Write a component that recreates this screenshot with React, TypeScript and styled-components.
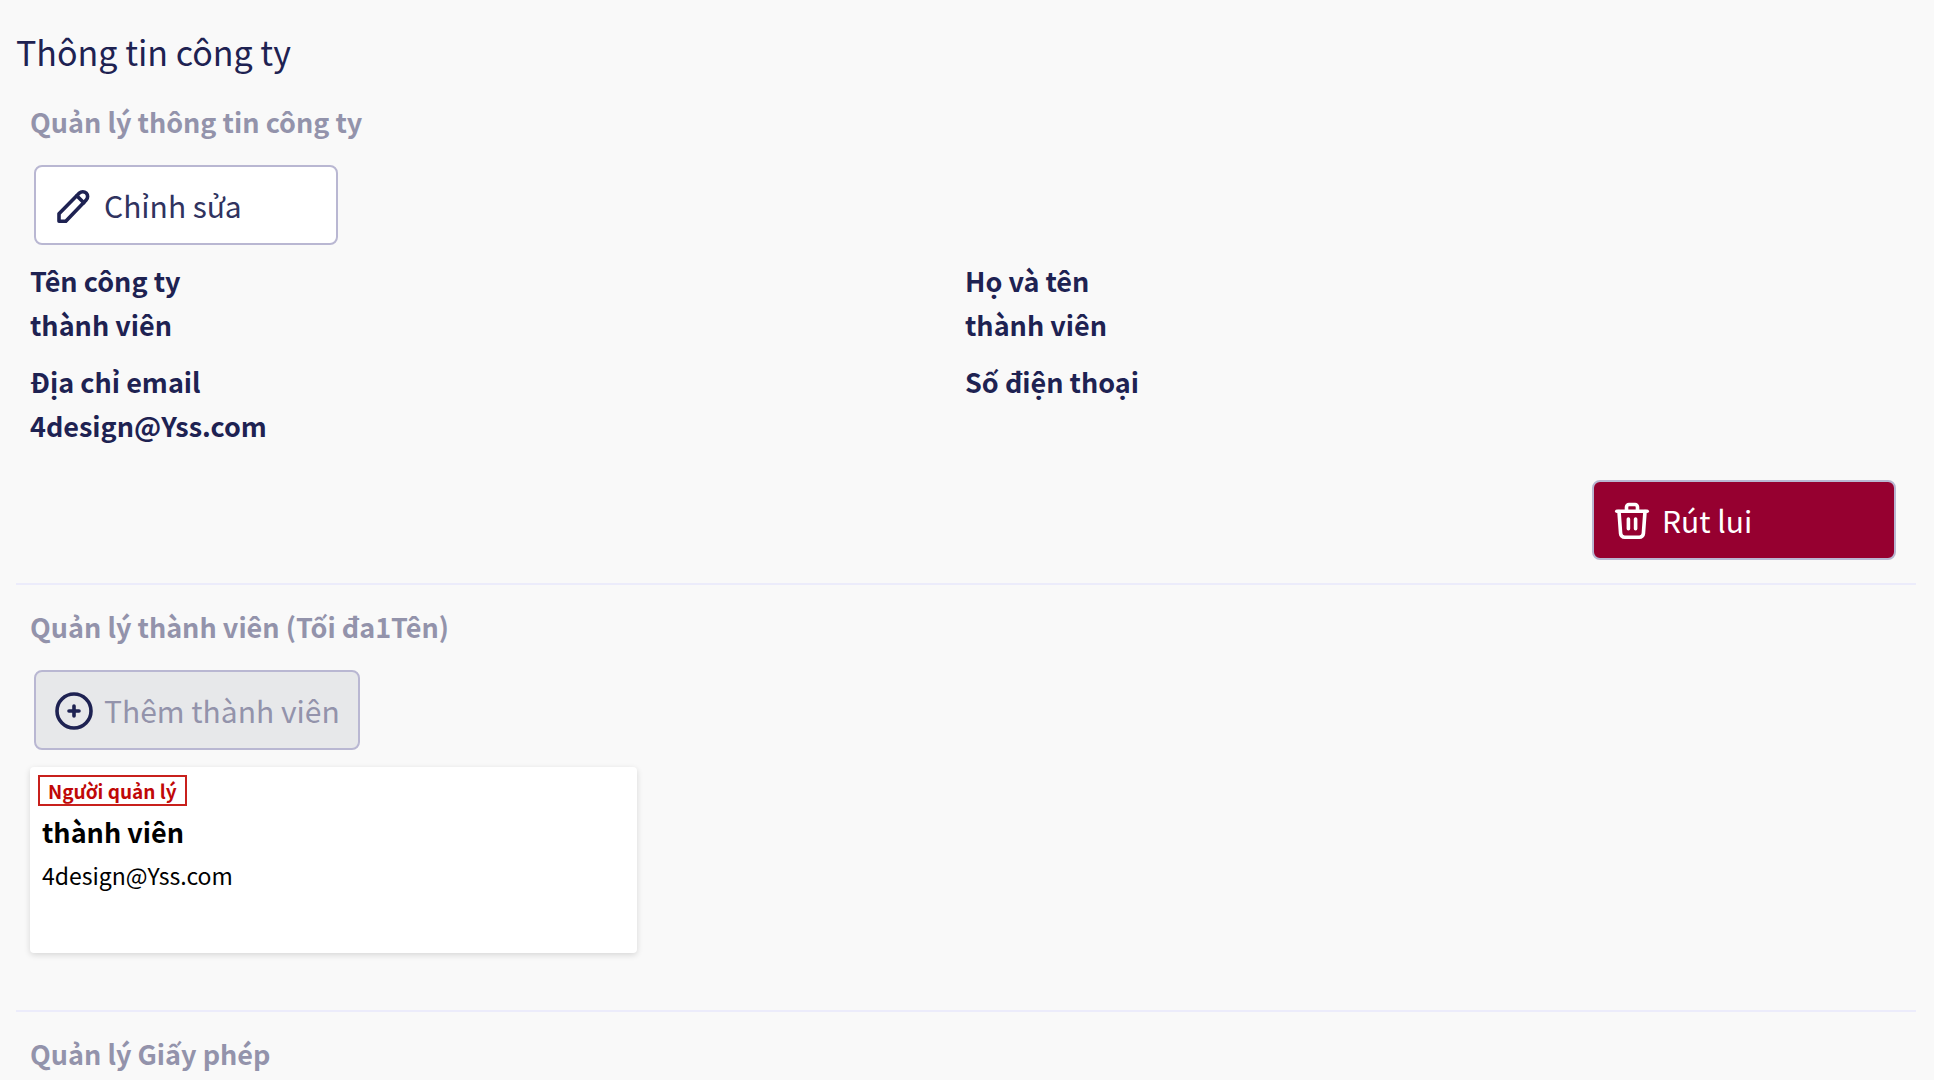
import React from "react";
import styled, { createGlobalStyle } from "styled-components";

const GlobalStyle = createGlobalStyle`
  *, *::before, *::after { box-sizing: border-box; }
  body {
    margin: 0;
    background: #f9f9f9;
    color: #1e2252;
    font-family: "Noto Sans CJK JP", "Noto Sans", sans-serif;
  }
  h1, h2, p, dl, dt, dd, ul { margin: 0; padding: 0; }
`;

const Page = styled.main`
  padding: 24px 18px 0 16px;
`;

const Title = styled.h1`
  font-size: 34px;
  font-weight: 400;
  line-height: 56px;
`;

const Section = styled.section<{ $tall?: boolean }>`
  padding: 20px 16px ${(p) => (p.$tall ? 57 : 23)}px 14px;

  & + & {
    border-top: 2px solid #ececfb;
  }
`;

const SectionTitle = styled.h2`
  color: #9393ab;
  font-size: 27px;
  font-weight: 700;
  line-height: 44px;
`;

const ActionButton = styled.button<{ $tone?: "danger" }>`
  display: flex;
  align-items: center;
  gap: 10px;
  min-width: 304px;
  height: 80px;
  padding: 0 18px;
  border: 2px solid #b9b7d2;
  border-radius: 8px;
  background: ${(p) => (p.$tone === "danger" ? "#960030" : "#ffffff")};
  color: ${(p) => (p.$tone === "danger" ? "#ffffff" : "#30335f")};
  font-family: inherit;
  font-size: 30px;
  line-height: 44px;
  white-space: nowrap;

  &:disabled {
    background: #e7e8ea;
    color: #9393ab;
  }
`;

const ButtonRow = styled.div<{ $end?: boolean }>`
  display: flex;
  justify-content: ${(p) => (p.$end ? "flex-end" : "flex-start")};
  padding: ${(p) => (p.$end ? "32px 4px 0" : "21px 4px 14px")};
`;

const Details = styled.dl`
  display: grid;
  grid-template-columns: repeat(2, 1fr);
  row-gap: 13px;
`;

const Detail = styled.div`
  min-height: 88px;
  font-size: 27px;
  font-weight: 700;
  line-height: 44px;
`;

const MemberGrid = styled.ul`
  display: grid;
  grid-template-columns: repeat(3, 1fr);
  gap: 24px;
  margin-top: 3px;
  list-style: none;
`;

const MemberCard = styled.li`
  min-height: 186px;
  padding: 8px;
  border-radius: 4px;
  background: #ffffff;
  box-shadow: 0 2px 6px rgba(0, 0, 0, 0.14);
  color: #000000;
`;

const RoleTag = styled.span`
  display: block;
  width: fit-content;
  padding: 0 8px;
  border: 2px solid #c8201c;
  color: #c00808;
  font-size: 19px;
  font-weight: 700;
  line-height: 27px;
`;

const MemberName = styled.p`
  padding: 4px 4px 0;
  font-size: 27px;
  font-weight: 700;
  line-height: 44px;
`;

const MemberEmail = styled.p`
  padding: 0 4px;
  font-size: 23px;
  line-height: 42px;
`;

const Glyph = styled.svg`
  flex: none;
  width: 40px;
  height: 40px;
  fill: none;
  stroke: #1e2252;
  stroke-width: 3.6;
  stroke-linecap: round;
  stroke-linejoin: round;
`;

const TrashGlyph = styled(Glyph)`
  stroke: #ffffff;
`;

const PencilIcon = () => (
  <Glyph viewBox="0 0 40 40" aria-hidden="true">
    <path d="M5 36.200V28.800L25.400 8.100a4.800 4.800 0 0 1 6.800 6.800L11.800 36.200Z" />
    <path d="M22.800 10.800l7 7" />
  </Glyph>
);

const TrashIcon = () => (
  <TrashGlyph viewBox="0 0 40 40" aria-hidden="true">
    <path d="M4.800 11.200h30.400" />
    <path d="M14.500 10.800V7a2.500 2.500 0 0 1 2.500-2.500h6a2.500 2.500 0 0 1 2.500 2.500V10.800" />
    <path d="M7 11.500l1.600 22a4 4 0 0 0 4 3.700h14.800a4 4 0 0 0 4-3.700L33 11.500" />
    <path d="M16.400 19v9.800M23.600 19v9.800" />
  </TrashGlyph>
);

const PlusIcon = () => (
  <Glyph viewBox="0 0 40 40" aria-hidden="true">
    <circle cx="20" cy="21" r="17" />
    <path d="M20 16v10M15 21h10" />
  </Glyph>
);

const details = [
  { label: "Tên công ty", value: "thành viên" },
  { label: "Họ và tên", value: "thành viên" },
  { label: "Địa chỉ email", value: "4design@Yss.com" },
  { label: "Số điện thoại", value: "" },
];

const members = [
  { role: "Người quản lý", name: "thành viên", email: "4design@Yss.com" },
];

export default function App() {
  return (
    <>
      <GlobalStyle />
      <Page>
        <Title>Thông tin công ty</Title>
        <Section>
          <SectionTitle>Quản lý thông tin công ty</SectionTitle>
          <ButtonRow>
            <ActionButton type="button">
              <PencilIcon />
              Chỉnh sửa
            </ActionButton>
          </ButtonRow>
          <Details>
            {details.map((d) => (
              <Detail key={d.label}>
                <dt>{d.label}</dt>
                <dd>{d.value}</dd>
              </Detail>
            ))}
          </Details>
          <ButtonRow $end>
            <ActionButton type="button" $tone="danger">
              <TrashIcon />
              Rút lui
            </ActionButton>
          </ButtonRow>
        </Section>
        <Section $tall>
          <SectionTitle>Quản lý thành viên (Tối đa1Tên)</SectionTitle>
          <ButtonRow>
            <ActionButton type="button" disabled>
              <PlusIcon />
              Thêm thành viên
            </ActionButton>
          </ButtonRow>
          <MemberGrid>
            {members.map((m) => (
              <MemberCard key={m.email}>
                <RoleTag>{m.role}</RoleTag>
                <MemberName>{m.name}</MemberName>
                <MemberEmail>{m.email}</MemberEmail>
              </MemberCard>
            ))}
          </MemberGrid>
        </Section>
        <Section>
          <SectionTitle>Quản lý Giấy phép</SectionTitle>
        </Section>
      </Page>
    </>
  );
}
